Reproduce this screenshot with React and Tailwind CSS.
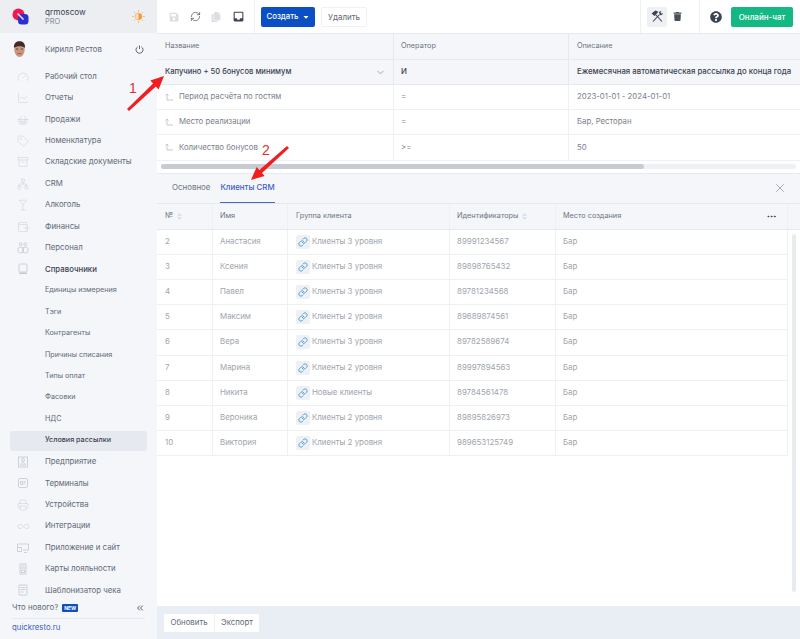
import React from "react";
import {
  Gauge, ChartLine, ShoppingBasket, Tag, Archive, Network, Martini, Wallet, Printer, Infinity as InfinityIcon,
  ChevronDown, ChevronsLeft, X, Link, ChevronsUpDown, Ellipsis, RefreshCw,
} from "lucide-react";
import { FaSave, FaCopy, FaTrash, FaQuestionCircle, FaCaretDown } from "react-icons/fa";
import { MdInbox } from "react-icons/md";

// icons that the packages do not have in this shape
function Draw({ children }) {
  return (
    <svg width="12" height="12" viewBox="0 0 12 12" fill="none" stroke="currentColor" strokeWidth="0.8">
      {children}
    </svg>
  );
}
const PeopleIcon = () => (
  <Draw><circle cx="3.7" cy="2.2" r="1.4" /><circle cx="8.3" cy="2.2" r="1.4" /><circle cx="3.7" cy="8" r="3" /><circle cx="8.3" cy="8" r="3" /></Draw>
);
const BookIcon = () => (
  <Draw><rect x="2" y="1" width="8" height="8" rx="1" /><path d="M2 9.500h8v1.500H2z" fill="currentColor" stroke="none" /></Draw>
);
const FirmIcon = () => (
  <Draw><rect x="1.500" y="1" width="9" height="10" /><circle cx="6" cy="4" r="1.500" /><path d="M3.500 9c0-3 5-3 5 0z" /></Draw>
);
const TerminalIcon = () => (
  <Draw><rect x="1.500" y="1.500" width="9" height="9" rx="1.500" /><path d="M3.500 4.500h2v3h-2zM6.500 4.500h2M6.500 6h2M6.500 7.500h1" /></Draw>
);
const AppIcon = () => (
  <Draw><path d="M.5 2h11v6H6" /><path d="M.5 2v3" /><rect x=".5" y="5.500" width="4" height="4" /><path d="M7 10.500h3" /></Draw>
);
const CardIcon = () => (
  <Draw><rect x="3" y="1" width="6" height="10" /><path d="M3 5h6M4.500 7h3v2.500h-3zM4.500 3h3" /></Draw>
);
const ReceiptIcon = () => (
  <Draw><rect x="2" y="1" width="8" height="10" rx=".5" /><path d="M3.500 3.500h5M3.500 5.500h5M3.500 8h3" /></Draw>
);

const topMenu = [
  ["Рабочий стол", () => <Gauge size={12} strokeWidth={0.9} />],
  ["Отчеты", () => <ChartLine size={12} strokeWidth={0.9} />],
  ["Продажи", () => <ShoppingBasket size={12} strokeWidth={0.9} />],
  ["Номенклатура", () => <Tag size={12} strokeWidth={0.9} />],
  ["Складские документы", () => <Archive size={12} strokeWidth={0.9} />],
  ["CRM", () => <Network size={12} strokeWidth={0.9} />],
  ["Алкоголь", () => <Martini size={12} strokeWidth={0.9} />],
  ["Финансы", () => <Wallet size={12} strokeWidth={0.9} />],
  ["Персонал", PeopleIcon],
];
const subMenu = ["Единицы измерения", "Тэги", "Контрагенты", "Причины списания", "Типы оплат", "Фасовки", "НДС"];
const bottomMenu = [
  ["Предприятие", FirmIcon],
  ["Терминалы", TerminalIcon],
  ["Устройства", () => <Printer size={12} strokeWidth={0.9} />],
  ["Интеграции", () => <InfinityIcon size={13} strokeWidth={0.9} />],
  ["Приложение и сайт", AppIcon],
  ["Карты лояльности", CardIcon],
  ["Шаблонизатор чека", ReceiptIcon],
];
const conditions = [
  ["Период расчёта по гостям", "=", "2023-01-01 - 2024-01-01"],
  ["Место реализации", "=", "Бар, Ресторан"],
  ["Количество бонусов", ">=", "50"],
];
const clients = [
  ["2", "Анастасия", "Клиенты 3 уровня", "89991234567"],
  ["3", "Ксения", "Клиенты 3 уровня", "89898765432"],
  ["4", "Павел", "Клиенты 3 уровня", "89781234568"],
  ["5", "Максим", "Клиенты 2 уровня", "89689874561"],
  ["6", "Вера", "Клиенты 3 уровня", "89782589674"],
  ["7", "Марина", "Клиенты 2 уровня", "89997894563"],
  ["8", "Никита", "Новые клиенты", "89784561478"],
  ["9", "Вероника", "Клиенты 2 уровня", "89895826973"],
  ["10", "Виктория", "Клиенты 2 уровня", "989653125749"],
];

function MenuItem({ label, Icon, bold }) {
  return (
    <div className="flex h-[21.42px] items-center">
      <div className="flex w-[45px] justify-center pl-[1px] text-[#c4c8d0]">
        <Icon />
      </div>
      <span className={bold ? "font-medium text-[#3b4250]" : "text-[#636a76]"}>{label}</span>
    </div>
  );
}

function Sidebar() {
  return (
    <div className="flex h-full w-[157px] shrink-0 flex-col bg-[#f4f6fa] text-[7.8px]">
      <div className="flex h-[33px] shrink-0 items-center bg-[#eceef2] pl-[12px] pr-[12px]">
        <svg width="17" height="17" viewBox="0 0 17 17">
          <circle cx="6.500" cy="6.500" r="6" fill="#f0184f" />
          <rect x="6" y="6" width="10.500" height="10.500" rx="3.500" fill="#2b2fd0" />
          <path d="M5.500 5.500l6 6" stroke="#f4d8e8" strokeWidth="1.600" />
        </svg>
        <div className="ml-[16px] flex-1 text-[8.2px] leading-[10px]">
          <div className="text-[#3b4250]">qrmoscow</div>
          <div className="text-[7.5px] text-[#8a909b]">PRO</div>
        </div>
        <svg width="13" height="13" viewBox="0 0 13 13" stroke="#f2b36a" strokeWidth="0.8">
          <path d="M6.500 0v2M6.500 11v2M0 6.500h2M11 6.500h2M1.900 1.900l1.400 1.400M9.700 9.700l1.400 1.400M1.900 11.100l1.400-1.400M9.700 3.300l1.400-1.400" />
          <circle cx="6.500" cy="6.500" r="3.300" fill="#fbe3c2" />
          <path d="M6.500 3.200a3.300 3.300 0 0 1 0 6.600z" fill="#f09a30" stroke="none" />
        </svg>
      </div>
      <div className="flex h-[33px] shrink-0 items-center pl-[13px] pr-[13px]">
        <svg width="13" height="17" viewBox="0 0 13 17">
          <ellipse cx="6.500" cy="8.500" rx="5.200" ry="7.500" fill="#c9957e" />
          <path d="M1 7C.5 2 3.500.3 6.500.3S12.500 2 12 7C10.500 4.500 2.500 4.500 1 7z" fill="#3d2c25" />
          <path d="M3 8h2.200M7.800 8H10" stroke="#4a3028" strokeWidth=".8" />
          <path d="M4.500 12.500h4" stroke="#8a4a40" strokeWidth=".7" />
        </svg>
        <span className="ml-[19px] flex-1 text-[#636a76]">Кирилл Рестов</span>
        <svg width="9" height="9" viewBox="0 0 9 9" fill="none" stroke="#3b4250" strokeWidth="0.8">
          <path d="M2.600 1.800a3.500 3.500 0 1 0 3.800 0M4.500.5v3.500" />
        </svg>
      </div>
      <div className="min-h-0 flex-1">
        {topMenu.map(([label, Icon]) => <MenuItem key={label} label={label} Icon={Icon} />)}
        <MenuItem label="Справочники" Icon={BookIcon} bold />
        {subMenu.map((label) => (
          <div key={label} className="flex h-[21.42px] items-center pl-[45px] text-[7.2px] text-[#636a76]">{label}</div>
        ))}
        <div className="flex h-[21.42px] items-center px-[10px]">
          <div className="flex h-[20px] flex-1 items-center rounded-[2px] bg-[#e6e9ef] pl-[35px] text-[7.2px] font-medium text-[#3b4250]">
            Условия рассылки
          </div>
        </div>
        {bottomMenu.map(([label, Icon]) => <MenuItem key={label} label={label} Icon={Icon} />)}
      </div>
      <div className="flex h-[21px] shrink-0 items-center pl-[12px] pr-[12px] text-[#636a76]">
        <span>Что нового?</span>
        <span className="ml-[4px] w-[16px] rounded-[1px] bg-[#0f4fc0] text-center text-[5px] font-bold leading-[8px] text-white">NEW</span>
        <ChevronsLeft size={10} className="ml-auto text-[#3b4250]" />
      </div>
      <div className="mx-[12px] border-t border-[#e6e9ef]" />
      <div className="flex h-[18px] shrink-0 items-center pl-[12px] text-[#3f5fc0]">quickresto.ru</div>
      <div className="h-[2px] shrink-0" />
    </div>
  );
}

function Toolbar() {
  return (
    <div className="flex h-[33px] shrink-0 items-center bg-white">
      <div className="flex h-full w-[98px] items-center gap-[10.5px] border-r border-[#eef0f4] pl-[12px]">
        <FaSave size={10} className="text-[#dadde2]" />
        <RefreshCw size={11} strokeWidth={1.5} className="text-[#48505c]" />
        <FaCopy size={10} className="text-[#dadde2]" />
        <MdInbox size={13} className="text-[#3b4250]" />
      </div>
      <button className="ml-[6px] flex h-[20px] w-[54px] items-center justify-center gap-[3px] rounded-[2px] bg-[#0b4fc4] text-[7.8px] font-medium text-white">
        Создать <FaCaretDown size={8} />
      </button>
      <button className="ml-[6px] h-[20px] w-[46px] rounded-[2px] border border-[#eef0f4] text-[8px] text-[#636a76]">Удалить</button>
      <div className="ml-auto flex h-full items-center border-l border-r border-[#eef0f4] pl-[6px] pr-[17px]">
        <div className="flex h-[20px] w-[20px] items-center justify-center rounded-[2px] bg-[#eef0f4]">
          <svg width="13" height="13" viewBox="0 0 13 13" fill="none" stroke="#3b4250" strokeWidth="1.100">
            <path d="M2 11.500L8.500 4.500M11 11.500L4.500 4.500" />
            <path d="M1.500 3.500L4.500 1.200l2 .8-3 3.200z" fill="#3b4250" />
            <path d="M8 2.500a2 2 0 0 1 2.500-1l-1 1.200 1 1 1.200-1a2 2 0 0 1-2.700 2.300z" fill="#3b4250" stroke="none" />
          </svg>
        </div>
        <FaTrash size={9} className="ml-[6px] text-[#48505c]" />
      </div>
      <FaQuestionCircle size={12} className="ml-[10px] text-[#3b4250]" />
      <button className="ml-[9px] mr-[7px] h-[20px] w-[62px] rounded-[2px] bg-[#14b884] text-[8px] font-medium text-white">Онлайн-чат</button>
    </div>
  );
}

function ConditionsTable() {
  const cols = "grid grid-cols-[237px_175px_1fr] items-center";
  return (
    <div className="shrink-0 text-[7.8px]">
      <div className={`${cols} h-[27px] border-y border-[#e6e9ee] bg-[#f4f6fa] text-[7.3px] text-[#6d7480]`}>
        <div className="flex h-full items-center border-r border-[#e6e9ee] pl-[8px]">Название</div>
        <div className="flex h-full items-center border-r border-[#e6e9ee] pl-[7px]">Оператор</div>
        <div className="pl-[8px]">Описание</div>
      </div>
      <div className={`${cols} h-[25px] border-b border-[#e6e9ee] bg-[#f4f6fa] text-[7.8px] font-medium text-[#3b4250]`}>
        <div className="flex h-full items-center justify-between border-r border-[#e6e9ee] pl-[8px] pr-[7px] text-[7.6px]">
          Капучино + 50 бонусов минимум
          <ChevronDown size={11} className="text-[#9aa0aa]" />
        </div>
        <div className="flex h-full items-center border-r border-[#e6e9ee] pl-[7px]">И</div>
        <div className="whitespace-nowrap pl-[8px]">Ежемесячная автоматическая рассылка до конца года</div>
      </div>
      {conditions.map(([name, op, value]) => (
        <div key={name} className={`${cols} h-[25.2px] border-b border-[#eef0f4] text-[#7a808b]`}>
          <div className="flex h-full items-center border-r border-[#eef0f4] pl-[8px]">
            <svg width="8" height="8" viewBox="0 0 8 8" fill="none" stroke="#c4c8cf" strokeWidth="1" className="mr-[6px]">
              <path d="M2 1v6h6M.5 2.500L2 1l1.500 1.500" />
            </svg>
            {name}
          </div>
          <div className="flex h-full items-center border-r border-[#eef0f4] pl-[7px]">{op}</div>
          <div className="pl-[8px]">{value}</div>
        </div>
      ))}
      <div className="flex h-[13px] items-center border-b border-[#e6e9ee] px-[4px]">
        <div className="h-[5px] w-full rounded-full bg-[#eef0f4]">
          <div className="h-full w-[76%] rounded-full bg-[#c8cbd2]" />
        </div>
      </div>
    </div>
  );
}

function ClientsTable() {
  const cols = "grid grid-cols-[56px_75px_162px_106px_232px_1fr]";
  const cell = "flex h-full items-center border-r border-[#eef0f4]";
  return (
    <div className="relative min-h-0 flex-1 text-[7.9px]">
      <div className={`${cols} h-[26px] items-center border-b border-[#e6e9ee] bg-[#f4f6fa] text-[7.3px] text-[#6d7480]`}>
        <div className={`${cell} pl-[8px]`}>№ <ChevronsUpDown size={7} className="ml-[3px] text-[#9aa0aa]" /></div>
        <div className={`${cell} pl-[7px]`}>Имя</div>
        <div className={`${cell} pl-[8px]`}>Группа клиента</div>
        <div className={`${cell} pl-[7px]`}>Идентификаторы <ChevronsUpDown size={7} className="ml-[3px] text-[#9aa0aa]" /></div>
        <div className={`${cell} justify-between pl-[7px] pr-[10px]`}>Место создания <Ellipsis size={11} className="text-[#3b4250]" /></div>
        <div />
      </div>
      {clients.map(([num, name, group, id]) => (
        <div key={num} className={`${cols} h-[25.2px] items-center text-[#a0a5ae]`}>
          <div className={`${cell} border-b pl-[8px]`}>{num}</div>
          <div className={`${cell} border-b pl-[7px]`}>{name}</div>
          <div className={`${cell} border-b pl-[8px]`}>
            <span className="mr-[2px] flex h-[14px] w-[14px] items-center justify-center rounded-[2px] bg-[#eef0f4]">
              <Link size={10} strokeWidth={2.2} className="text-[#4a9cc8]" />
            </span>
            {group}
          </div>
          <div className={`${cell} border-b pl-[7px]`}>{id}</div>
          <div className={`${cell} border-b pl-[7px]`}>Бар</div>
          <div />
        </div>
      ))}
      <div className="absolute bottom-[14px] right-[4px] top-[30px] w-[4px] rounded-full bg-[#e8ebf0]" />
    </div>
  );
}

function Arrows() {
  return (
    <svg className="pointer-events-none absolute left-0 top-0" width="800" height="639">
      <path d="M127 109L153.100 83.500L150.400 80.600L164 76L158.600 89.400L155.900 86.500L129 111z" fill="#f01e1e" />
      <path d="M287 146L259.400 169.900L256.700 166.900L251 180L264.700 175.900L262 172.900L289 148z" fill="#f01e1e" />
      <text x="129" y="93" fill="#e03030" fontSize="14" fontFamily="Liberation Sans, sans-serif">1</text>
      <text x="262" y="155" fill="#e03030" fontSize="14" fontFamily="Liberation Sans, sans-serif">2</text>
    </svg>
  );
}

export default function App() {
  return (
    <div className="relative flex h-[639px] w-[800px] overflow-hidden bg-white font-['Inter',sans-serif]">
      <Sidebar />
      <div className="flex min-w-0 flex-1 flex-col">
        <Toolbar />
        <ConditionsTable />
        <div className="flex h-[30px] shrink-0 items-stretch border-b border-[#e6e9ee] bg-[#f4f6fa] pl-[15px] pr-[13px] text-[7.9px]">
          <div className="flex items-center text-[#6d7480]">Основное</div>
          <div className="ml-[10px] flex items-center border-b border-[#4a63c8] font-medium text-[#3f5fc0]">Клиенты CRM</div>
          <X size={14} strokeWidth={1.1} className="ml-auto self-center text-[#7a808b]" />
        </div>
        <ClientsTable />
        <div className="flex h-[33px] shrink-0 items-center bg-[#e9eef5] pl-[7px] text-[7.8px] text-[#636a76]">
          <button className="h-[18px] w-[50px] bg-white">Обновить</button>
          <button className="h-[18px] w-[45px] border-l border-[#eef0f4] bg-white">Экспорт</button>
        </div>
      </div>
      <Arrows />
    </div>
  );
}
